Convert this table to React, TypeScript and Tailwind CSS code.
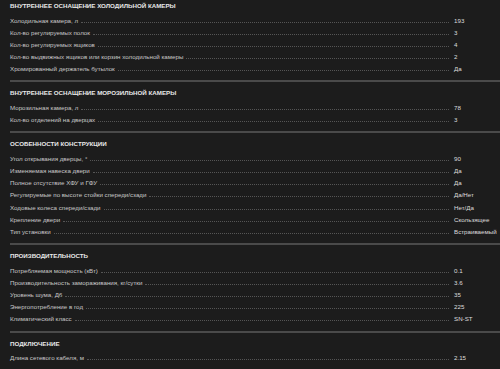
import React from "react";

type Row = [string, string];
type Section = { title: string; rows: Row[] };

const sections: Section[] = [
  {
    title: "Внутреннее оснащение холодильной камеры",
    rows: [
      ["Холодильная камера, л", "193"],
      ["Кол-во регулируемых полок", "3"],
      ["Кол-во регулируемых ящиков", "4"],
      ["Кол-во выдвижных ящиков или корзин холодильной камеры", "2"],
      ["Хромированный держатель бутылок", "Да"],
    ],
  },
  {
    title: "Внутреннее оснащение морозильной камеры",
    rows: [
      ["Морозильная камера, л", "78"],
      ["Кол-во отделений на дверцах", "3"],
    ],
  },
  {
    title: "Особенности конструкции",
    rows: [
      ["Угол открывания дверцы, °", "90"],
      ["Изменяемая навеска двери", "Да"],
      ["Полное отсутствие ХФУ и ГФУ", "Да"],
      ["Регулируемые по высоте стойки спереди/сзади", "Да/Нет"],
      ["Ходовые колеса спереди/сзади", "Нет/Да"],
      ["Крепление двери", "Скользящее"],
      ["Тип установки", "Встраиваемый"],
    ],
  },
  {
    title: "Производительность",
    rows: [
      ["Потребляемая мощность (кВт)", "0.1"],
      ["Производительность замораживания, кг/сутки", "3.6"],
      ["Уровень шума, Дб", "35"],
      ["Энергопотребление в год", "225"],
      ["Климатический класс", "SN-ST"],
    ],
  },
  {
    title: "Подключение",
    rows: [["Длина сетевого кабеля, м", "2.15"]],
  },
];

export default function App() {
  return (
    <div className="h-[369px] w-[500px] overflow-hidden bg-[#1c1c1c] pl-[10px] font-['Liberation_Sans',Arial,sans-serif]">
      {sections.map((section, i) => (
        <section
          key={section.title}
          className={i < sections.length - 1 ? "border-b-2 border-[#4a4a4a] pb-[5px]" : ""}
          style={{ paddingTop: i === 0 ? 0 : 5 }}
        >
          <h3 className="h-[12px] text-[6.2px] font-bold uppercase leading-[12px] text-[#e8e8e8]">
            {section.title}
          </h3>
          <div className="mt-[2.5px]">
            {section.rows.map(([label, value]) => (
              <div key={label} className="flex h-[12.2px] items-center text-[6.2px] leading-[12.2px]">
                <span className="shrink-0 text-[#c8c8c8]">{label}</span>
                <span className="mx-[3px] mr-[5px] mt-[3px] flex-1 border-b border-dotted border-[#555]" />
                <span className="w-[46px] shrink-0 whitespace-nowrap text-[#dcdcdc]">{value}</span>
              </div>
            ))}
          </div>
        </section>
      ))}
    </div>
  );
}
